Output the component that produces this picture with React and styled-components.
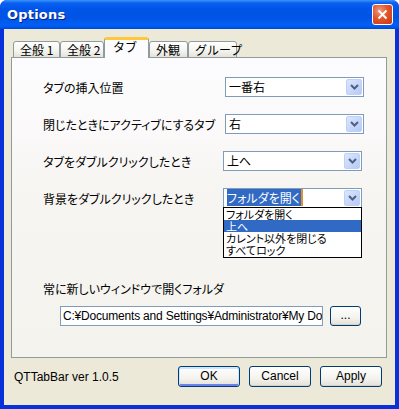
import styled, { createGlobalStyle } from 'styled-components';

const GlobalStyle = createGlobalStyle`
  html, body {
    margin: 0;
    padding: 0;
    background: #ffffff;
  }
  body {
    font-family: 'Liberation Sans', 'Noto Sans CJK JP', sans-serif;
    font-size: 12px;
    color: #000;
  }
`;

const jp = `'Noto Sans CJK JP', 'Liberation Sans', sans-serif`;

const Window = styled.div`
  width: 399px;
  height: 409px;
  box-sizing: border-box;
  display: flex;
  flex-direction: column;
  background: #0831d9;
  border-radius: 7px 7px 0 0;
  overflow: hidden;
`;

const TitleBar = styled.div`
  height: 29px;
  flex: none;
  display: flex;
  align-items: center;
  justify-content: space-between;
  padding: 0 6px 0 7px;
  background: linear-gradient(
    #3d95ff 0%,
    #0a62ef 10%,
    #0055e9 30%,
    #0053e3 60%,
    #0060f5 85%,
    #0058ee 92%,
    #0048d4 100%
  );
`;

const Title = styled.span`
  font-family: 'DejaVu Sans', 'Liberation Sans', sans-serif;
  font-weight: bold;
  font-size: 13px;
  color: #fff;
  text-shadow: 1px 1px 0 #0a1e8a;
  letter-spacing: 0.2px;
`;

const CloseButton = styled.div`
  width: 21px;
  height: 21px;
  box-sizing: border-box;
  border: 1px solid #fff;
  border-radius: 3px;
  background: radial-gradient(circle at 35% 30%, #f09a7c 0%, #e2542c 45%, #c8380f 100%);
  display: flex;
  align-items: center;
  justify-content: center;
`;

const Body = styled.div`
  flex: 1;
  margin: 0 4px 4px 4px;
  background: #ece9d8;
  display: flex;
  flex-direction: column;
  padding: 9px 8px 0 7px;
`;

const TabStrip = styled.div`
  display: flex;
  align-items: flex-end;
  height: 20px;
  padding-left: 2px;
  position: relative;
  z-index: 1;
  margin-bottom: -1px;
`;

const Tab = styled.div`
  width: ${(p) => p.$w}px;
  box-sizing: border-box;
  height: ${(p) => (p.$active ? 21 : 17)}px;
  border: 1px solid #919b9c;
  border-bottom: ${(p) => (p.$active ? 'none' : '1px solid #919b9c')};
  border-top: ${(p) => (p.$active ? '3px solid #ffc83c' : '1px solid #919b9c')};
  border-radius: 3px 3px 0 0;
  background: ${(p) =>
    p.$active ? '#fcfcfe' : 'linear-gradient(#ffffff, #f3f3ef 60%, #e4e2da)'};
  font-family: ${jp};
  font-size: 12px;
  line-height: 14px;
  padding: ${(p) => (p.$active ? '0 0 0 8px' : '1px 0 0 6px')};
  white-space: nowrap;
`;

const Panel = styled.div`
  height: 301px;
  box-sizing: border-box;
  border: 1px solid #919b9c;
  background: linear-gradient(#fcfcfe 0%, #fbf9f9 25%, #f6f5f1 45%, #f4f3ee 100%);
  padding: 19px 22px 0 31px;
  display: flex;
  flex-direction: column;
  gap: 17px;
`;

const Row = styled.div`
  display: flex;
  align-items: center;
  height: 20px;
  position: relative;
`;

const Label = styled.span`
  font-family: ${jp};
  font-size: 12px;
  font-feature-settings: 'palt';
  white-space: nowrap;
`;

const Combo = styled.div`
  margin-left: auto;
  margin-right: ${(p) => p.$shift || 0}px;
  width: 139px;
  height: 20px;
  box-sizing: border-box;
  border: 1px solid #7f9db9;
  background: #fff;
  display: flex;
  align-items: center;
  padding: 1px 1px 1px 3px;
  position: relative;
`;

const ComboText = styled.span`
  flex: 1;
  font-family: ${jp};
  font-size: 12px;
  font-feature-settings: 'palt';
  line-height: 16px;
  white-space: nowrap;
`;

const Selected = styled.span`
  background: #316ac5;
  color: #fff;
  border-right: 2px solid #e0902c;
  padding-right: 1px;
`;

const DropButton = styled.div`
  width: 16px;
  height: 16px;
  box-sizing: border-box;
  border: 1px solid #bdd0fa;
  border-radius: 2px;
  background: linear-gradient(135deg, #dce6fd, #b6caf6);
  display: flex;
  align-items: center;
  justify-content: center;
`;

const DropList = styled.div`
  position: absolute;
  top: 100%;
  left: -1px;
  width: 139px;
  box-sizing: border-box;
  border: 1px solid #000;
  background: #fff;
  padding: 0 0 1px 0;
  z-index: 2;
`;

const DropItem = styled.div`
  height: 12px;
  line-height: 12px;
  padding-left: 2px;
  font-family: ${jp};
  font-size: 11px;
  font-feature-settings: 'palt';
  white-space: nowrap;
  background: ${(p) => (p.$hi ? '#316ac5' : 'transparent')};
  color: ${(p) => (p.$hi ? '#fff' : '#000')};
`;

const FolderBlock = styled.div`
  display: flex;
  flex-direction: column;
  margin-top: 55px;
`;

const PathRow = styled.div`
  display: flex;
  align-items: center;
  gap: 7px;
  margin: 9px 0 0 17px;
`;

const PathInput = styled.div`
  width: 263px;
  height: 20px;
  box-sizing: border-box;
  border: 1px solid #7f9db9;
  background: #fff;
  padding: 1px 0 0 2px;
  font-size: 12px;
  line-height: 16px;
  letter-spacing: -0.2px;
  white-space: nowrap;
  overflow: hidden;
`;

const Button = styled.div`
  width: ${(p) => p.$w || 62}px;
  height: ${(p) => p.$h || 21}px;
  box-sizing: border-box;
  border: 1px solid #003c74;
  border-radius: 3px;
  background: linear-gradient(#ffffff 0%, #f4f3ee 60%, #e3e0d6 100%);
  box-shadow: ${(p) =>
    p.$default
      ? 'inset 0 1px 0 1px #cee7ff, inset 0 -1px 0 1px #6982ee'
      : 'inset 0 -1px 0 #d6d0c5'};
  display: flex;
  align-items: center;
  justify-content: center;
  font-size: 12px;
  padding-bottom: 2px;
`;

const Footer = styled.div`
  display: flex;
  align-items: center;
  margin-top: 8px;
  padding: 0 5px 0 3px;
  gap: 9px;
`;

const Version = styled.span`
  margin-right: auto;
  font-size: 12px;
`;

const Chevron = () => (
  <svg width="9" height="6" viewBox="0 0 9 6">
    <path d="M1 1 L4.5 4.5 L8 1" stroke="#4d6185" strokeWidth="2" fill="none" />
  </svg>
);

const CloseX = () => (
  <svg width="11" height="11" viewBox="0 0 11 11">
    <path d="M1.5 1.5 L9.5 9.5 M9.5 1.5 L1.5 9.5" stroke="#fff" strokeWidth="2" />
  </svg>
);

const tabs = [
  { name: '全般 1', w: 47 },
  { name: '全般 2', w: 44 },
  { name: 'タブ', w: 45, active: true },
  { name: '外観', w: 39 },
  { name: 'グループ', w: 49 },
];

const settings = [
  { label: 'タブの挿入位置', value: '一番右' },
  { label: '閉じたときにアクティブにするタブ', value: '右' },
  { label: 'タブをダブルクリックしたとき', value: '上へ', shift: 2 },
];

const App = () => (
  <>
    <GlobalStyle />
    <Window>
      <TitleBar>
        <Title>Options</Title>
        <CloseButton>
          <CloseX />
        </CloseButton>
      </TitleBar>
      <Body>
        <TabStrip>
          {tabs.map((t) => (
            <Tab key={t.name} $w={t.w} $active={t.active}>
              {t.name}
            </Tab>
          ))}
        </TabStrip>
        <Panel>
          {settings.map((s) => (
            <Row key={s.label}>
              <Label>{s.label}</Label>
              <Combo $shift={s.shift}>
                <ComboText>{s.value}</ComboText>
                <DropButton>
                  <Chevron />
                </DropButton>
              </Combo>
            </Row>
          ))}
          <Row>
            <Label>背景をダブルクリックしたとき</Label>
            <Combo $shift={2}>
              <ComboText>
                <Selected>フォルダを開く</Selected>
              </ComboText>
              <DropButton>
                <Chevron />
              </DropButton>
              <DropList>
                <DropItem>フォルダを開く</DropItem>
                <DropItem $hi>上へ</DropItem>
                <DropItem>カレント以外を閉じる</DropItem>
                <DropItem>すべてロック</DropItem>
              </DropList>
            </Combo>
          </Row>
          <FolderBlock>
            <Label>常に新しいウィンドウで開くフォルダ</Label>
            <PathRow>
              <PathInput>C:¥Documents and Settings¥Administrator¥My Doc</PathInput>
              <Button $w={31} $h={20}>...</Button>
            </PathRow>
          </FolderBlock>
        </Panel>
        <Footer>
          <Version>QTTabBar ver 1.0.5</Version>
          <Button $default>OK</Button>
          <Button>Cancel</Button>
          <Button>Apply</Button>
        </Footer>
      </Body>
    </Window>
  </>
);

export default App;
